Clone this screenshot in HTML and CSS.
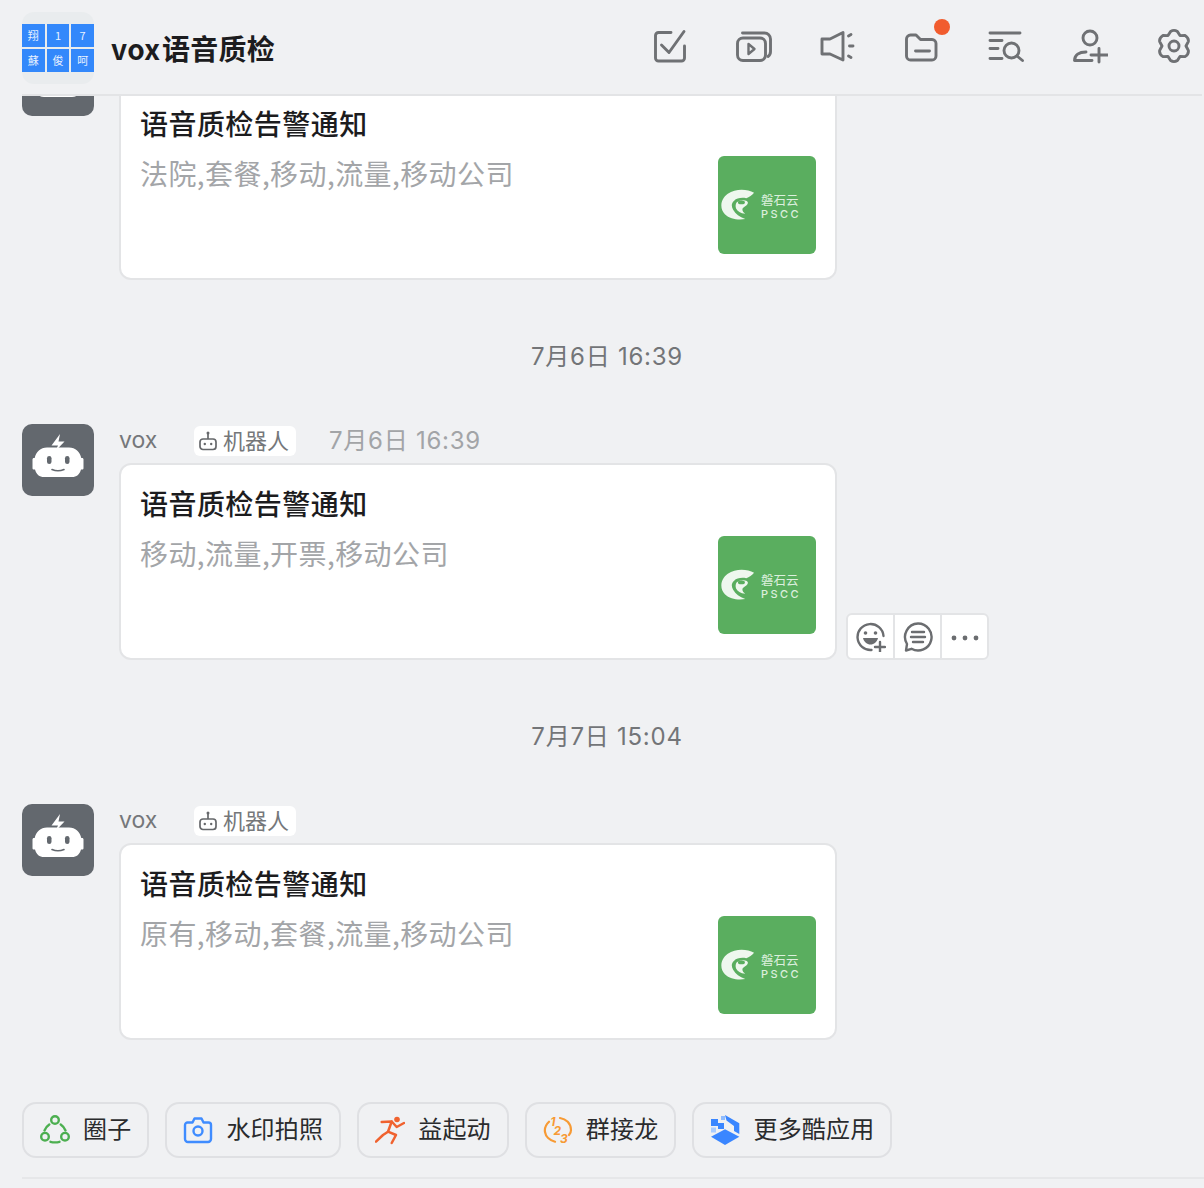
FILE: index.html
```html
<!DOCTYPE html>
<html lang="zh">
<head>
<meta charset="utf-8">
<title>vox语音质检</title>
<link rel="stylesheet" href="styles.css">
</head>
<body>
<svg class="defs" width="0" height="0" aria-hidden="true">
  <defs>
    <symbol id="bot" viewBox="0 0 72 72">
      <path d="M38 10L29.500 21.500h6.500L33.500 27l9-9.500h-6z" fill="#fff"/>
      <path d="M25 23.500h22c6.500 0 11 4.500 12.300 10.500h.7c1 0 1.500.6 1.500 1.500V44c0 1-.5 1.500-1.500 1.500h-1c-1.300 5-4.500 7.500-9 7.500H22c-4.500 0-7.700-2.500-9-7.500h-1c-1 0-1.500-.5-1.500-1.500v-8.500c0-.9.5-1.500 1.500-1.500h.7C14 28 18.500 23.500 25 23.500z" fill="#fff"/>
      <rect x="25" y="32" width="4.500" height="8" rx="2.250" fill="#63686e"/>
      <rect x="43" y="32" width="4.500" height="8" rx="2.250" fill="#63686e"/>
      <path d="M30 45.500q6 2.500 12 0" fill="none" stroke="#63686e" stroke-width="1.600" stroke-linecap="round"/>
    </symbol>
    <symbol id="mini-bot" viewBox="0 0 20 20">
      <g fill="none" stroke="#66686b" stroke-width="1.700">
        <path d="M10 2.500V8"/>
        <rect x="2" y="8" width="16" height="10.500" rx="3"/>
      </g>
      <circle cx="10" cy="2" r="1.500" fill="#66686b"/>
      <circle cx="6.800" cy="13" r="1.200" fill="#66686b"/>
      <circle cx="13.200" cy="13" r="1.200" fill="#66686b"/>
    </symbol>
    <symbol id="pscc" viewBox="0 0 36 32">
      <path d="M34 3.500C27 -.5 15 -1 7 4.500-1 10 -1.500 20 4 25.500c5 5 13 6 21 5-6-2-10-5-12.500-9.500-2-3.500-2-7 1-9.500C16 9 21 8 26 9c3-1 6-3 8-5.500z" fill="#eef7ee"/>
      <path d="M16 13.500c3-2.500 8-3 10.500-1.500 1.800 1.200 1.500 3-.5 4.500-2 1.500-4 2.500-4 4 0 1.500 1 3 3 4.500-5-.5-8-2.500-9.500-5.500-.8-2.200-.5-4.500.5-6z" fill="#eef7ee"/>
      <ellipse cx="21" cy="13.300" rx="3.600" ry="1.900" fill="#5aae5f"/>
    </symbol>
  </defs>
</svg>

<div class="page">
  <header class="header">
    <div class="logo">
      <div class="logo-grid">
        <span class="logo-cell">翔</span><span class="logo-cell">1</span><span class="logo-cell">7</span>
        <span class="logo-cell">蘇</span><span class="logo-cell">俊</span><span class="logo-cell">呵</span>
      </div>
    </div>
    <h1 class="title">vox 语音质检</h1>
    <nav class="tools">
      <svg class="tool" viewBox="0 0 36 36"><path d="M19 4.500H6.500a3 3 0 0 0-3 3V30a3 3 0 0 0 3 3h23a3 3 0 0 0 3-3V18"/><path d="M9.500 17l7.500 7.500L32 3.500"/></svg>
      <svg class="tool" viewBox="0 0 36 36"><rect x="1.500" y="10" width="28" height="22.500" rx="5.500"/><path d="M6.500 5h22a6 6 0 0 1 6 6v12.500a6 6 0 0 1-2.500 5"/><path d="M12.500 16l6 5-6 5z" stroke-width="2.400"/></svg>
      <svg class="tool" viewBox="0 0 36 36"><path d="M2 11h8L23 4.500V32L10 26H2z"/><path d="M28.500 8l2.500-1.500M29.500 18h3.500M28.500 28l2.500 1.500"/></svg>
      <span class="tool-wrap">
        <svg class="tool" viewBox="0 0 36 36"><path d="M2.500 11a4 4 0 0 1 4-4h5.500l4.500 4.500h11.500a4 4 0 0 1 4 4V28a4 4 0 0 1-4 4H6.500a4 4 0 0 1-4-4z"/><path d="M11.500 23h14"/></svg>
        <span class="dot"></span>
      </span>
      <svg class="tool" viewBox="0 0 36 36"><path d="M2 5h30M2 12.500h12M2 20.500h8M2 30.500h12"/><circle cx="23.500" cy="22.500" r="7.500"/><path d="M29 28l5.500 4.500"/></svg>
      <svg class="tool" viewBox="0 0 36 36"><circle cx="18" cy="10" r="7"/><path d="M14 24C7 24 2.500 27 2.500 32.500H20M19 27h16.500M27 20.500V34"/></svg>
      <svg class="tool" viewBox="0 0 36 36"><path d="M14.600 3.400Q18 1.400 21.400 3.400L24 7.600l5-.2Q33 10 32.300 13.600L30 18l2.300 4.400Q33 26 29 28.600l-5-.2-2.600 4.200Q18 34.600 14.600 32.600L12 28.400l-5 .2Q3 26 3.700 22.400L6 18l-2.300-4.400Q3 10 7 7.400l5 .2z"/><circle cx="18" cy="18" r="5"/></svg>
    </nav>
  </header>

  <main class="feed">
    <div class="feed-inner">
      <article class="msg">
        <svg class="avatar"><use href="#bot"/></svg>
        <div class="msg-body">
          <div class="msg-meta"></div>
          <div class="msg-row">
            <div class="card">
              <div class="card-title">语音质检告警通知</div>
              <div class="card-main">
                <div class="card-sub">法院,套餐,移动,流量,移动公司</div>
                <div class="thumb">
                  <svg class="thumb-logo"><use href="#pscc"/></svg>
                  <div class="thumb-text"><span class="thumb-cn">磐石云</span><span class="thumb-en">PSCC</span></div>
                </div>
              </div>
            </div>
          </div>
        </div>
      </article>

      <div class="stamp">7月6日 16:39</div>

      <article class="msg">
        <svg class="avatar"><use href="#bot"/></svg>
        <div class="msg-body">
          <div class="msg-meta">
            <span class="name">vox</span>
            <span class="tag"><svg class="tag-icon"><use href="#mini-bot"/></svg>机器人</span>
            <span class="msg-time">7月6日 16:39</span>
          </div>
          <div class="msg-row">
            <div class="card">
              <div class="card-title">语音质检告警通知</div>
              <div class="card-main">
                <div class="card-sub">移动,流量,开票,移动公司</div>
                <div class="thumb">
                  <svg class="thumb-logo"><use href="#pscc"/></svg>
                  <div class="thumb-text"><span class="thumb-cn">磐石云</span><span class="thumb-en">PSCC</span></div>
                </div>
              </div>
            </div>
            <div class="actions">
              <button class="action" type="button" aria-label="表情">
                <svg class="action-icon" viewBox="0 0 30 30"><path d="M27.500 14a13 13 0 1 0-12 14"/><circle cx="9.500" cy="11" r="1.800" class="fill"/><circle cx="19.500" cy="11" r="1.800" class="fill"/><path d="M7 16h15c-1 4-4 6.500-7.500 6.500S8 20 7 16z" class="fill"/><path d="M19 25h10M24 20v10"/></svg>
              </button>
              <button class="action" type="button" aria-label="回复">
                <svg class="action-icon" viewBox="0 0 30 30"><path d="M15 1.500a13.500 13.500 0 1 1-6.500 25.300L3 28.500l1-6.500A13.500 13.500 0 0 1 15 1.500z"/><path d="M9 10h12M8 15h14M10 20h10"/></svg>
              </button>
              <button class="action" type="button" aria-label="更多">
                <svg class="action-icon" viewBox="0 0 30 30"><circle cx="4" cy="16" r="2.400" class="fill"/><circle cx="15" cy="16" r="2.400" class="fill"/><circle cx="26" cy="16" r="2.400" class="fill"/></svg>
              </button>
            </div>
          </div>
        </div>
      </article>

      <div class="stamp">7月7日 15:04</div>

      <article class="msg">
        <svg class="avatar"><use href="#bot"/></svg>
        <div class="msg-body">
          <div class="msg-meta">
            <span class="name">vox</span>
            <span class="tag"><svg class="tag-icon"><use href="#mini-bot"/></svg>机器人</span>
          </div>
          <div class="msg-row">
            <div class="card">
              <div class="card-title">语音质检告警通知</div>
              <div class="card-main">
                <div class="card-sub">原有,移动,套餐,流量,移动公司</div>
                <div class="thumb">
                  <svg class="thumb-logo"><use href="#pscc"/></svg>
                  <div class="thumb-text"><span class="thumb-cn">磐石云</span><span class="thumb-en">PSCC</span></div>
                </div>
              </div>
            </div>
          </div>
        </div>
      </article>
    </div>
  </main>

  <footer class="footer">
    <div class="apps">
      <button class="app" type="button">
        <svg class="app-icon" viewBox="0 0 30 30" fill="none" stroke="#4caf50" stroke-width="2.400">
          <circle cx="15" cy="5" r="3.800"/><circle cx="5" cy="21.700" r="3.800"/><circle cx="25" cy="21.700" r="3.800"/>
          <path d="M9.300 9.500A13 13 0 0 0 4.500 15.500M20.700 9.500A13 13 0 0 1 25.500 15.500M10.500 26.800Q15 28 19.500 26.800" stroke-linecap="round"/>
        </svg>圈子
      </button>
      <button class="app" type="button">
        <svg class="app-icon" viewBox="0 0 30 30" fill="none" stroke="#3f8cff" stroke-width="2.400" stroke-linejoin="round">
          <path d="M4.500 7.500h5l2-4h7l2 4h5a2.500 2.500 0 0 1 2.500 2.500v14a3 3 0 0 1-3 3H5a3 3 0 0 1-3-3V10a2.500 2.500 0 0 1 2.500-2.500z"/>
          <circle cx="15" cy="16" r="4.500"/>
        </svg>水印拍照
      </button>
      <button class="app" type="button">
        <svg class="app-icon" viewBox="0 0 30 30" fill="none" stroke="#f0622f" stroke-width="2.500" stroke-linecap="round" stroke-linejoin="round">
          <circle cx="22" cy="4.500" r="2.800" fill="#f0622f" stroke="none"/>
          <path d="M6.700 7l10-.5L13 16.700l8 3.300-4.300 8"/>
          <path d="M13 16.700L8 20l-7 6.700"/>
          <path d="M16.700 6.500l5 5.500 7.300-4"/>
        </svg>益起动
      </button>
      <button class="app" type="button">
        <svg class="app-icon" viewBox="0 0 30 30" fill="none" stroke="#f79a34" stroke-width="2.200" stroke-linecap="round">
          <path d="M6 6.700C2.500 10 1.500 14 2 17c.7 4.500 4.500 8.500 10 9.700M17 3c6 .8 11 5.500 11 12 0 1.800-.6 3.500-2 5"/>
          <text x="10" y="11" class="digit">1</text>
          <text x="14.500" y="19.500" class="digit">2</text>
          <text x="21" y="28" class="digit">3</text>
        </svg>群接龙
      </button>
      <button class="app" type="button">
        <svg class="app-icon" viewBox="0 0 30 30">
          <path d="M15 0l14.300 8.300V19l-5.300-3V11L16.500 5.500z" fill="#3a86ff"/>
          <path d="M15 14.300l14.300 7.400L15 30 1 21.700z" fill="#3a86ff"/>
          <rect x="1" y="4" width="7" height="7" fill="#3a86ff"/>
          <rect x="8" y="8" width="6" height="6" fill="#3a86ff"/>
          <rect x="11" y="1" width="4" height="4" fill="#8fbcff"/>
          <rect x="1" y="12.500" width="5" height="5" fill="#a9ccff"/>
        </svg>更多酷应用
      </button>
    </div>
    <div class="footer-rule"></div>
  </footer>
</div>
</body>
</html>
```
FILE: styles.css
```css
* {
  box-sizing: border-box;
}

html,
body {
  margin: 0;
  padding: 0;
  height: 100%;
  overflow: hidden;
}

body {
  background: #f0f1f3;
  color: #1c1c1e;
  font-family: "Noto Sans CJK SC", "Inter", sans-serif;
}

.defs {
  display: block;
  height: 0;
  overflow: hidden;
}

.page {
  display: flex;
  flex-direction: column;
  height: 1188px;
  width: 1204px;
  overflow: hidden;
}

/* header */
.header {
  display: flex;
  align-items: flex-start;
  flex: none;
  height: 96px;
  margin: 0 2px 0 22px;
  padding: 12px 10px 0 0;
  border-bottom: 2px solid #e3e4e6;
}

.logo {
  flex: none;
  display: flex;
  align-items: center;
  width: 72px;
  height: 72px;
  border-radius: 12px;
  background: #e9ecee;
}

.logo-grid {
  display: grid;
  grid-template-columns: repeat(3, 1fr);
  grid-auto-rows: 23px;
  gap: 2px;
  width: 72px;
}

.logo-cell {
  display: flex;
  align-items: center;
  justify-content: center;
  background: #3388fb;
  color: #e8f1ff;
  font-size: 11px;
  line-height: 1;
}

.title {
  margin: 0 0 0 17px;
  font-size: 28px;
  font-weight: 700;
  line-height: 72px;
  letter-spacing: .3px;
  word-spacing: -5px;
  color: #1c1c1e;
}

.tools {
  display: flex;
  align-items: center;
  gap: 48px;
  margin: 16px 0 0 auto;
}

.tool {
  display: block;
  width: 36px;
  height: 36px;
  fill: none;
  stroke: #6f7174;
  stroke-width: 2.900;
  stroke-linecap: round;
  stroke-linejoin: round;
}

.tool-wrap {
  position: relative;
  display: block;
  width: 36px;
  height: 36px;
}

.dot {
  position: absolute;
  top: -9px;
  right: -10px;
  width: 16px;
  height: 16px;
  border-radius: 50%;
  background: #f15c2e;
}

/* feed */
.feed {
  flex: 1;
  min-height: 0;
  overflow: hidden;
}

.feed-inner {
  display: flex;
  flex-direction: column;
  margin-top: -52px;
}

.msg {
  display: flex;
  align-items: flex-start;
  gap: 25px;
  padding-left: 22px;
}

.avatar {
  flex: none;
  display: block;
  width: 72px;
  height: 72px;
  border-radius: 10px;
  background: #63686e;
}

.msg-meta {
  display: flex;
  align-items: center;
  height: 34px;
  margin-bottom: 5px;
}

.name {
  width: 75px;
  padding-bottom: 1px;
  font-family: "Inter", "Noto Sans CJK SC", sans-serif;
  font-size: 23px;
  line-height: 33px;
  color: #75777a;
}

.tag {
  display: flex;
  align-items: center;
  gap: 5px;
  width: 102px;
  height: 30px;
  padding: 0 0 4px 4px;
  border-radius: 6px;
  background: #fff;
  font-size: 22px;
  line-height: 26px;
  color: #75777a;
}

.tag-icon {
  flex: none;
  width: 20px;
  height: 20px;
  margin-top: 4px;
}

.msg-time {
  margin-left: 33px;
  font-family: "Inter", "Noto Sans CJK SC", sans-serif;
  font-size: 24px;
  line-height: 34px;
  letter-spacing: .75px;
  color: #a2a4a7;
}

.msg-row {
  display: flex;
  align-items: flex-end;
  gap: 9px;
}

.card {
  width: 718px;
  height: 197px;
  padding: 18px 19px 23px 19px;
  border: 2px solid #e3e4e6;
  border-radius: 12px;
  background: #fff;
}

.card-title {
  font-size: 28px;
  font-weight: 500;
  line-height: 40px;
  letter-spacing: .45px;
  color: #1c1c1e;
}

.card-main {
  display: flex;
  justify-content: space-between;
  align-items: flex-start;
  margin-top: 10px;
}

.card-sub {
  font-size: 28px;
  line-height: 40px;
  letter-spacing: .42px;
  color: #a3a5a8;
}

.thumb {
  flex: none;
  display: flex;
  align-items: center;
  gap: 5px;
  width: 98px;
  height: 98px;
  margin-top: 3px;
  padding-left: 3px;
  border-radius: 6px;
  background: #5aae5f;
}

.thumb-logo {
  flex: none;
  width: 35px;
  height: 32px;
}

.thumb-text {
  display: flex;
  flex-direction: column;
  align-items: flex-start;
  padding-top: 3px;
  color: #dcefdd;
}

.thumb-cn {
  font-size: 12.500px;
  line-height: 15px;
}

.thumb-en {
  font-family: "Inter", sans-serif;
  font-size: 11px;
  font-weight: 500;
  line-height: 15px;
  letter-spacing: 2.400px;
}

.actions {
  display: flex;
  flex: none;
  height: 47px;
  border: 2px solid #e3e4e6;
  border-radius: 6px;
  background: #e3e4e6;
  gap: 2px;
  overflow: hidden;
}

.action {
  display: flex;
  align-items: center;
  justify-content: center;
  width: 45px;
  padding: 0;
  border: 0;
  background: #fff;
}

.action-icon {
  display: block;
  width: 30px;
  height: 30px;
  fill: none;
  stroke: #6b6d70;
  stroke-width: 2.400;
  stroke-linecap: round;
  stroke-linejoin: round;
}

.action-icon .fill {
  fill: #6b6d70;
  stroke: none;
}

.stamp {
  margin-top: 57px;
  margin-bottom: 47px;
  padding-left: 10px;
  font-family: "Inter", "Noto Sans CJK SC", sans-serif;
  font-size: 24px;
  line-height: 39px;
  letter-spacing: .75px;
  text-align: center;
  color: #737578;
  padding-bottom: 1px;
}

/* footer */
.footer {
  flex: none;
  height: 86px;
  padding-left: 22px;
}

.apps {
  display: flex;
  gap: 16px;
}

.app {
  display: flex;
  align-items: center;
  gap: 13px;
  height: 56px;
  padding: 0 16px 4px 16px;
  border: 2px solid #dfe0e3;
  border-radius: 14px;
  background: transparent;
  font-family: "Noto Sans CJK SC", sans-serif;
  font-size: 24px;
  line-height: 1;
  letter-spacing: .2px;
  color: #2a2b2d;
}

.app-icon {
  flex: none;
  display: block;
  width: 30px;
  height: 30px;
  margin-top: 4px;
}

.digit {
  fill: #f79a34;
  stroke: none;
  font-family: "Inter", sans-serif;
  font-size: 12px;
  font-style: italic;
  font-weight: 700;
  text-anchor: middle;
}

.footer-rule {
  height: 2px;
  margin-top: 19px;
  background: #e6e7e9;
}
```
